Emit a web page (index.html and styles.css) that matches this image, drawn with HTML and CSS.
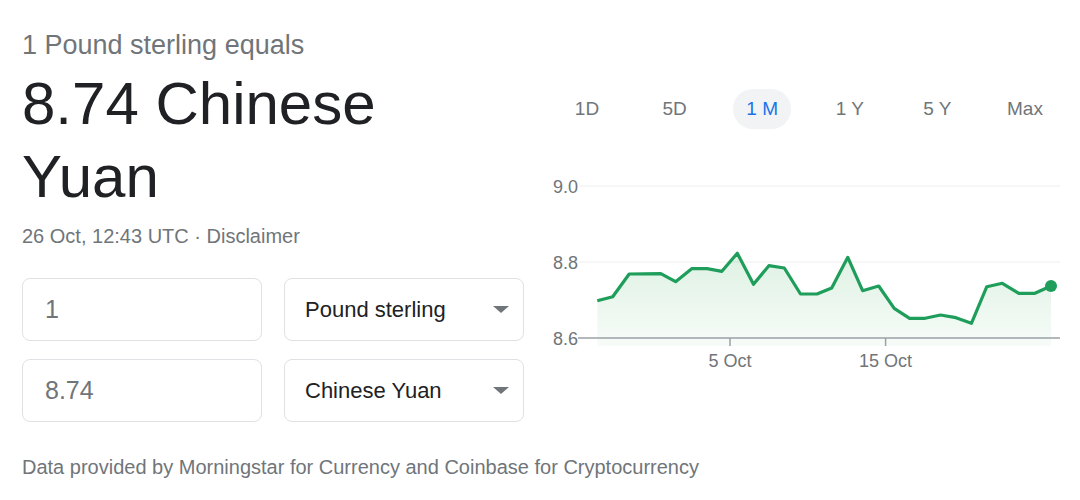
FILE: index.html
```html
<!DOCTYPE html>
<html lang="en">
<head>
    <meta charset="UTF-8">
    <title>GBP to CNY</title>
    <link rel="stylesheet" href="styles.css">
</head>
<body>
    <div class="converter">
        <div class="summary">
            <div class="sub">1 Pound sterling equals</div>
            <div class="rate">8.74 Chinese Yuan</div>
            <div class="stamp">26 Oct, 12:43 UTC · Disclaimer</div>

            <div class="fields">
                <input class="amount" type="text" value="1">
                <div class="currency">
                    <span>Pound sterling</span>
                    <span class="arrow"></span>
                </div>
                <input class="amount" type="text" value="8.74">
                <div class="currency">
                    <span>Chinese Yuan</span>
                    <span class="arrow"></span>
                </div>
            </div>
        </div>

        <div class="graph">
            <div class="ranges">
                <button>1D</button>
                <button>5D</button>
                <button class="active">1 M</button>
                <button>1 Y</button>
                <button>5 Y</button>
                <button>Max</button>
            </div>

            <!-- viewBox uses page coordinates so points read like the screenshot -->
            <svg class="chart" width="540" height="210" viewBox="540 170 540 210">
                <defs>
                    <linearGradient id="area" x1="0" y1="0" x2="0" y2="1">
                        <stop offset="0" stop-color="#34a853" stop-opacity="0.16"/>
                        <stop offset="1" stop-color="#34a853" stop-opacity="0.04"/>
                    </linearGradient>
                </defs>

                <line class="grid" x1="579" y1="186" x2="1060" y2="186"/>
                <line class="grid" x1="579" y1="262" x2="1060" y2="262"/>

                <polygon fill="url(#area)" points="597.3,346 597.3,300.7 612.7,296.7 629.2,274 660.8,273.7 675.6,281.7 691.7,268.7 707.1,268.7 721.9,271.3 737.3,253.3 753.5,284.3 768.9,265.7 784.3,268 800.5,294 817,294 831.7,288 847.8,257.3 862.6,290.7 878.7,286 894.2,308.3 909.6,318.3 925.1,318.3 940.5,315 955.9,317.7 971.4,323.3 986.8,286.7 1002.3,283.3 1018.8,293.3 1034.9,293.3 1051,286 1051,346"/>

                <line class="axis" x1="578" y1="338" x2="1060" y2="338"/>
                <line class="axis" x1="730" y1="338" x2="730" y2="346"/>
                <line class="axis" x1="885.6" y1="338" x2="885.6" y2="346"/>

                <polyline class="trend" points="597.3,300.7 612.7,296.7 629.2,274 660.8,273.7 675.6,281.7 691.7,268.7 707.1,268.7 721.9,271.3 737.3,253.3 753.5,284.3 768.9,265.7 784.3,268 800.5,294 817,294 831.7,288 847.8,257.3 862.6,290.7 878.7,286 894.2,308.3 909.6,318.3 925.1,318.3 940.5,315 955.9,317.7 971.4,323.3 986.8,286.7 1002.3,283.3 1018.8,293.3 1034.9,293.3 1051,286"/>
                <circle class="last" cx="1051" cy="286" r="6"/>

                <text class="label" x="578" y="193" text-anchor="end">9.0</text>
                <text class="label" x="578" y="269" text-anchor="end">8.8</text>
                <text class="label" x="578" y="344.5" text-anchor="end">8.6</text>
                <text class="label" x="730" y="367" text-anchor="middle">5 Oct</text>
                <text class="label" x="885.6" y="367" text-anchor="middle">15 Oct</text>
            </svg>
        </div>
    </div>

    <div class="source">Data provided by Morningstar for Currency and Coinbase for Cryptocurrency</div>
</body>
</html>
```

FILE: styles.css
```css
body {
    margin: 0;
    font-family: "Liberation Sans", Arial, sans-serif;
    color: #202124;
    background: #fff;
}
.converter {
    display: grid;
    grid-template-columns: 502px 540px;
    column-gap: 16px;
    align-items: start;
    padding: 30px 0 0 22px;
}
.sub {
    font-size: 27px;
    line-height: 30px;
    color: #70757a;
}
.rate {
    margin-top: 7px;
    max-width: 460px;
    font-size: 60px;
    line-height: 73px;
    color: #202124;
}
.stamp {
    margin-top: 11px;
    font-size: 20px;
    line-height: 24px;
    color: #70757a;
}
.fields {
    display: grid;
    grid-template-columns: 240px 240px;
    column-gap: 22px;
    row-gap: 18px;
    margin-top: 30px;
}
.amount, .currency {
    box-sizing: border-box;
    height: 63px;
    border: 1px solid #dfe1e5;
    border-radius: 8px;
    background: #fff;
}
.amount {
    width: 240px;
    padding: 0 0 0 22px;
    font-family: inherit;
    font-size: 25px;
    color: #70757a;
    outline: none;
}
.currency {
    display: flex;
    align-items: center;
    justify-content: space-between;
    padding: 0 14px 0 20px;
    font-size: 22px;
    color: #202124;
}
.arrow {
    width: 0;
    height: 0;
    border-left: 8px solid transparent;
    border-right: 8px solid transparent;
    border-top: 7px solid #70757a;
}
.ranges {
    display: flex;
    justify-content: space-between;
    width: 496px;
    margin: 59px 0 0 18px;
}
.ranges button {
    width: 58px;
    height: 40px;
    padding: 0;
    border: none;
    border-radius: 20px;
    background: none;
    font-family: inherit;
    font-size: 19px;
    color: #70757a;
    cursor: pointer;
}
.ranges button.active {
    background: #f1f3f4;
    color: #1a73e8;
}
.chart {
    display: block;
    margin-top: 41px;
}
.chart .grid {
    stroke: #eeeeee;
    stroke-width: 1;
}
.chart .axis {
    stroke: #9aa0a6;
    stroke-width: 1.5;
}
.chart .trend {
    fill: none;
    stroke: #1e9e5a;
    stroke-width: 3.2;
    stroke-linejoin: round;
}
.chart .last {
    fill: #1e9e5a;
}
.chart .label {
    font-family: "Liberation Sans", Arial, sans-serif;
    font-size: 18px;
    fill: #70757a;
}
.source {
    margin: 34px 0 0 22px;
    font-size: 20px;
    line-height: 22px;
    color: #70757a;
}
```
